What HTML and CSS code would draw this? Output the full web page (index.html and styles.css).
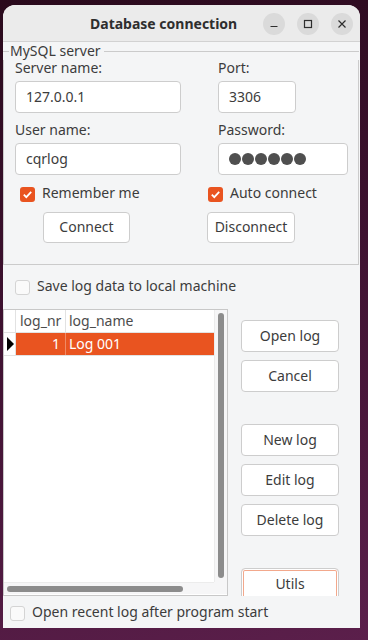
FILE: index.html
```html
<!DOCTYPE html>
<html>
  <head>
    <meta charset="UTF-8">
    <title>Database connection</title>
    <link rel="stylesheet" href="styles.css">
  </head>
  <body>
    <div class="window">
      <div class="titlebar">
        <span class="title">Database connection</span>
        <div class="wm-buttons">
          <span class="wm-button">
            <svg width="22" height="22" viewBox="0 0 22 22"><path d="M7.5 13.5h7" stroke="#2e2e2e" stroke-width="1.2" fill="none"/></svg>
          </span>
          <span class="wm-button">
            <svg width="22" height="22" viewBox="0 0 22 22"><rect x="7.5" y="7.5" width="7" height="7" stroke="#2e2e2e" stroke-width="1.2" fill="none"/></svg>
          </span>
          <span class="wm-button">
            <svg width="22" height="22" viewBox="0 0 22 22"><path d="M7.5 7.5l7 7M14.5 7.5l-7 7" stroke="#2e2e2e" stroke-width="1.2" fill="none"/></svg>
          </span>
        </div>
      </div>

      <div class="group">
        <div class="group-caption"><span>MySQL server</span></div>
        <div class="group-body">
          <div class="fields">
            <div class="field">
              <label>Server name:</label>
              <div class="edit">127.0.0.1</div>
            </div>
            <div class="field">
              <label>Port:</label>
              <div class="edit edit-port">3306</div>
            </div>
            <div class="field">
              <label>User name:</label>
              <div class="edit">cqrlog</div>
            </div>
            <div class="field">
              <label>Password:</label>
              <div class="edit">
                <span class="dots"><i></i><i></i><i></i><i></i><i></i><i></i></span>
              </div>
            </div>
          </div>
          <div class="check-row">
            <div class="check"><span class="box checked"><svg width="15" height="15" viewBox="0 0 15 15"><path d="M3.8 7.6l2.5 2.5 4.9-5.2" stroke="#fff" stroke-width="1.8" fill="none"/></svg></span><span class="check-text">Remember me</span></div>
            <div class="check"><span class="box checked"><svg width="15" height="15" viewBox="0 0 15 15"><path d="M3.8 7.6l2.5 2.5 4.9-5.2" stroke="#fff" stroke-width="1.8" fill="none"/></svg></span><span class="check-text">Auto connect</span></div>
          </div>
          <div class="button-row">
            <button type="button" class="btn btn-connect">Connect</button>
            <button type="button" class="btn btn-disconnect">Disconnect</button>
          </div>
        </div>
      </div>

      <div class="check option-save"><span class="box"></span><span class="check-text">Save log data to local machine</span></div>

      <div class="main">
        <div class="grid">
          <div class="data">
            <div class="row row-head">
              <div class="cell cell-ind"></div>
              <div class="cell cell-nr">log_nr</div>
              <div class="cell cell-name">log_name</div>
            </div>
            <div class="row row-selected">
              <div class="cell cell-ind"><span class="pointer"></span></div>
              <div class="cell cell-nr">1</div>
              <div class="cell cell-name">Log 001</div>
            </div>
          </div>
          <div class="vscroll"><span class="thumb"></span></div>
          <div class="hscroll"><span class="thumb"></span></div>
          <div class="corner"></div>
        </div>
        <div class="side">
          <button type="button" class="btn">Open log</button>
          <button type="button" class="btn">Cancel</button>
          <button type="button" class="btn spaced">New log</button>
          <button type="button" class="btn">Edit log</button>
          <button type="button" class="btn">Delete log</button>
          <button type="button" class="btn spaced focused">Utils</button>
        </div>
      </div>

      <div class="check option-recent"><span class="box"></span><span class="check-text">Open recent log after program start</span></div>
    </div>
  </body>
</html>
```

FILE: styles.css
```css
* {
  box-sizing: border-box;
}
body {
  margin: 0;
  height: 640px;
  overflow: hidden;
  background: linear-gradient(165deg, #2a0a1c 0%, #3e1130 45%, #5b1f4b 100%);
  font-family: "Noto Sans", sans-serif;
  font-size: 14px;
  color: #3c3c3c;
}
.window {
  margin: 5px 0 0 3px;
  width: 357px;
  height: 623px;
  background: #f4f5f6;
  border-radius: 12px 12px 0 0;
  overflow: hidden;
  display: flex;
  flex-direction: column;
}

/* title bar */
.titlebar {
  flex: none;
  height: 37px;
  padding: 1px 7px 0 87px;
  background: #ebebeb;
  border-bottom: 1px solid #d2d2d2;
  display: flex;
  align-items: center;
}
.title {
  font-weight: bold;
  color: #2e2e2e;
}
.wm-buttons {
  margin-left: auto;
  display: flex;
  gap: 12px;
}
.wm-button {
  width: 22px;
  height: 22px;
  border-radius: 50%;
  background: #dadada;
  display: flex;
}

/* group box */
.group {
  flex: none;
  margin-right: 1px;
}
.group-caption {
  display: flex;
  align-items: center;
  height: 18px;
  line-height: 17px;
}
.group-caption::before {
  content: "";
  width: 6px;
  border-top: 1px solid #cbcbcb;
}
.group-caption::after {
  content: "";
  flex: 1;
  border-top: 1px solid #cbcbcb;
}
.group-caption span {
  padding: 0 3px 2px 1px;
}
.group-body {
  border: 1px solid #cbcbcb;
  border-top: none;
  padding: 0 0 21px 11px;
}
.fields {
  display: grid;
  grid-template-columns: 166px 130px;
  column-gap: 37px;
  row-gap: 9px;
}
.field label {
  display: block;
  height: 17px;
  line-height: 15px;
}
.edit {
  margin-top: 4px;
  height: 32px;
  padding: 0 10px 1px;
  background: #fff;
  border: 1px solid #cdcdcd;
  border-radius: 4px;
  display: flex;
  align-items: center;
}
.edit-port {
  width: 78px;
}
.dots {
  display: flex;
  gap: 1px;
}
.dots i {
  width: 12px;
  height: 12px;
  border-radius: 50%;
  background: #4f4f4f;
}

/* check boxes */
.check {
  display: flex;
  align-items: center;
  gap: 7px;
  height: 18px;
}
.check-text {
  padding-bottom: 4px;
}
.box {
  width: 15px;
  height: 15px;
  border-radius: 3px;
  background: #fafafa;
  border: 1px solid #d4d4d4;
  display: flex;
}
.box.checked {
  background: #e95420;
  border: none;
}
.check-row {
  display: flex;
  margin-top: 10px;
  padding-left: 5px;
}
.check-row .check:first-child {
  width: 188px;
}
.option-save {
  flex: none;
  margin: 13px 0 0 12px;
}
.option-recent {
  flex: none;
  margin: 8px 0 0 7px;
}

/* buttons */
.btn {
  height: 32px;
  padding: 0 0 2px;
  font-family: inherit;
  font-size: 14px;
  color: #3c3c3c;
  background: #fff;
  border: 1px solid #cdcdcd;
  border-radius: 4px;
}
.button-row {
  display: flex;
  margin-top: 9px;
  padding-left: 28px;
}
.button-row .btn {
  height: 31px;
}
.btn-connect {
  width: 87px;
  margin-right: 77px;
}
.btn-disconnect {
  width: 88px;
}

/* log list */
.main {
  flex: none;
  display: flex;
  align-items: flex-start;
  margin-top: 13px;
  height: 287px;
  overflow: hidden;
}
.grid {
  flex: none;
  width: 225px;
  height: 287px;
  border: 1px solid #c8c8c8;
  background: #fff;
  display: grid;
  grid-template-columns: 210px 13px;
  grid-template-rows: 272px 12px;
}
.row {
  display: flex;
  height: 23px;
  line-height: 21px;
  border-bottom: 1px solid #e2e2e2;
}
.cell {
  border-right: 1px solid #e2e2e2;
  white-space: nowrap;
}
.cell-ind {
  width: 12px;
  display: flex;
  align-items: center;
}
.cell-nr {
  width: 50px;
  padding-left: 4px;
}
.cell-name {
  flex: 1;
  padding-left: 3px;
  border-right: none;
}
.row-head {
  color: #4c4c4c;
}
.row-selected .cell-nr,
.row-selected .cell-name {
  background: #e95420;
  color: #fff;
}
.row-selected .cell-nr {
  text-align: right;
  padding: 0 5px 0 0;
  border-right-color: #f08a66;
}
.pointer {
  margin-left: 3px;
  border-left: 7px solid #000;
  border-top: 7px solid transparent;
  border-bottom: 7px solid transparent;
}
.vscroll {
  background: #f6f6f7;
  border-left: 1px solid #ececec;
  padding: 3px 0 4px 3px;
  display: flex;
}
.vscroll .thumb {
  width: 6px;
  border-radius: 3px;
  background: #8c8c8c;
}
.hscroll {
  background: #f6f6f7;
  border-top: 1px solid #ececec;
  padding: 3px 0 0 3px;
}
.hscroll .thumb {
  display: block;
  width: 176px;
  height: 6px;
  border-radius: 3px;
  background: #8c8c8c;
}
.corner {
  background: #f6f6f7;
}
.side {
  flex: none;
  width: 98px;
  margin-left: 13px;
  padding-top: 11px;
  display: flex;
  flex-direction: column;
  gap: 8px;
}
.side .spaced {
  margin-top: 24px;
}
.btn.focused {
  box-shadow: inset 0 0 0 1px #fff, inset 0 0 0 2px #f2a88c;
}
```
